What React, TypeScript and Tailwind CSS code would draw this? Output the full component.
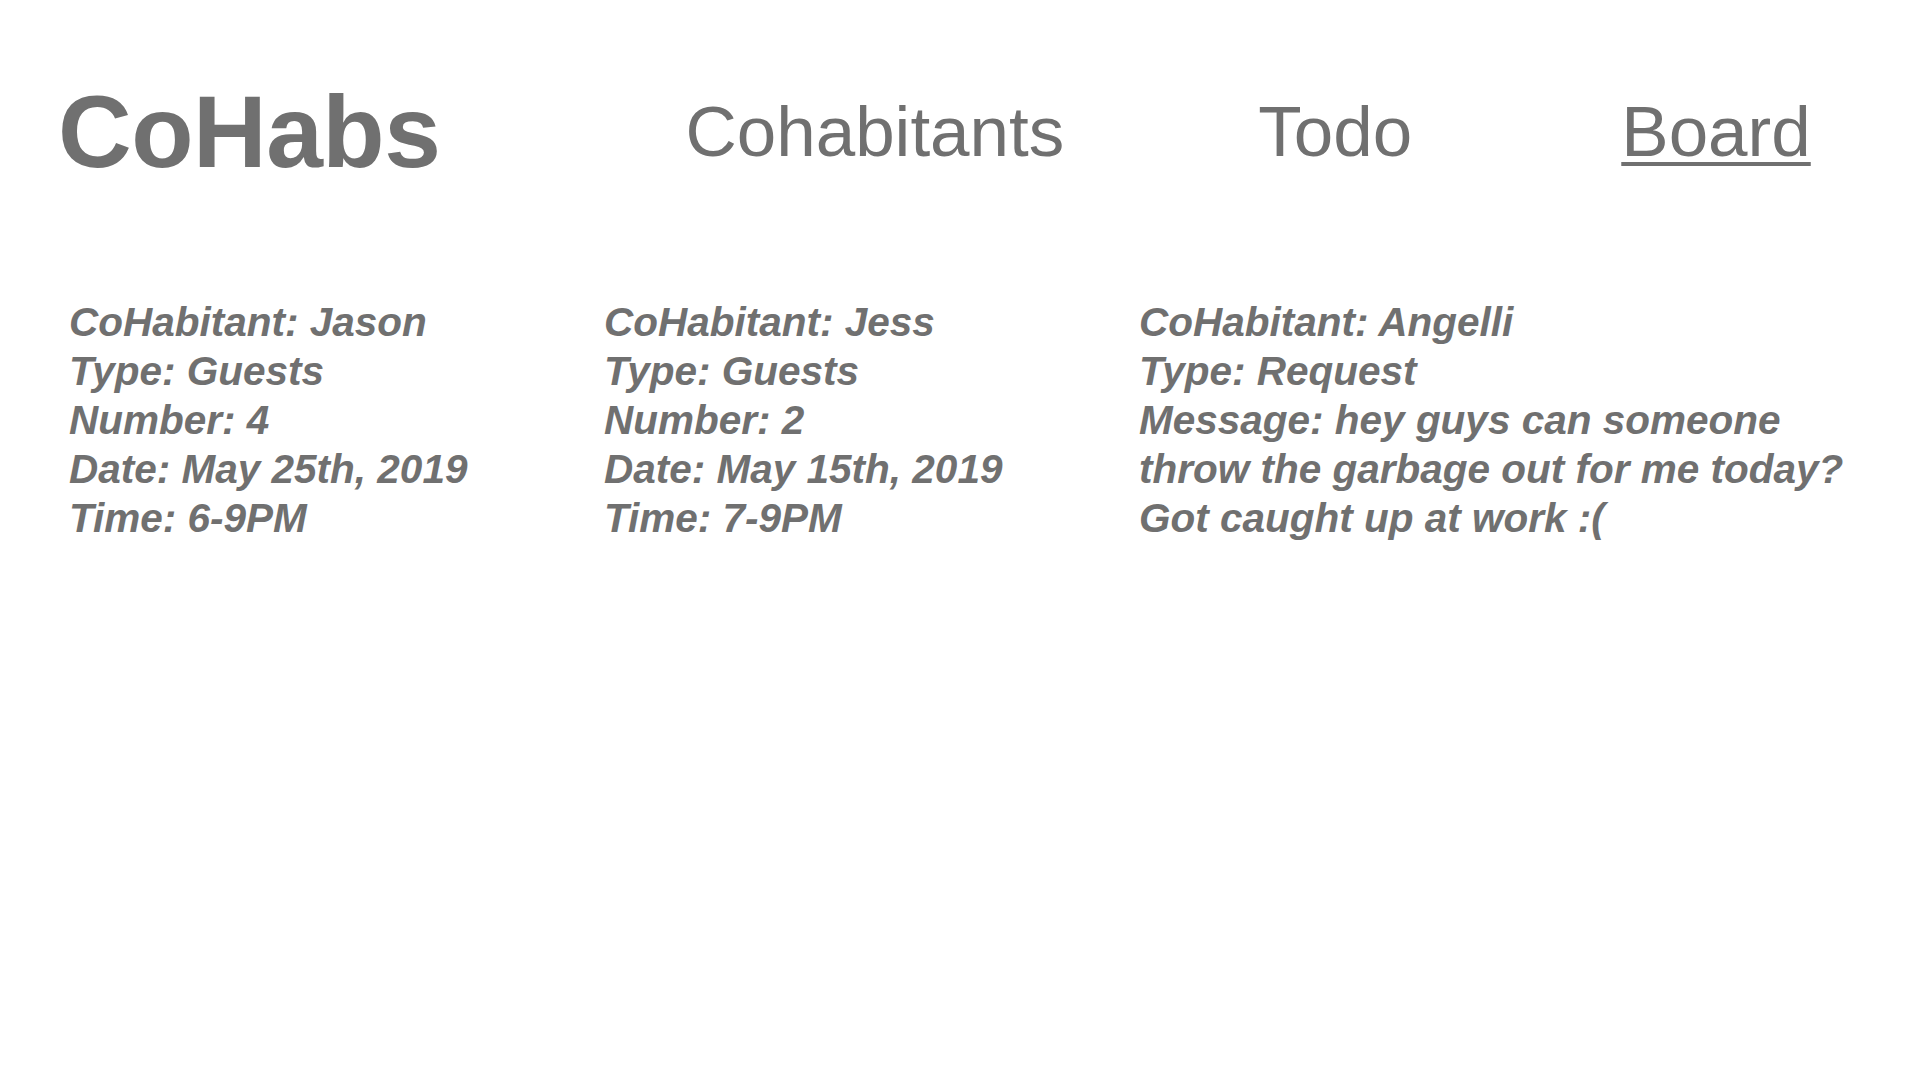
const posts = [
  {
    id: 1,
    lines: ["CoHabitant: Jason", "Type: Guests", "Number: 4", "Date: May 25th, 2019", "Time: 6-9PM"],
  },
  {
    id: 2,
    lines: ["CoHabitant: Jess", "Type: Guests", "Number: 2", "Date: May 15th, 2019", "Time: 7-9PM"],
  },
  {
    id: 3,
    lines: [
      "CoHabitant: Angelli",
      "Type: Request",
      "Message: hey guys can someone",
      "throw the garbage out for me today?",
      "Got caught up at work :(",
    ],
  },
];

const App = () => {
  return (
    <div className="w-[1920px] h-[1080px] bg-white text-[#707070] font-['Liberation_Sans',Arial,sans-serif] overflow-hidden">
      {/* header */}
      <header className="flex items-start pl-[58px] pt-[81px]">
        <h1 className="text-[102px] font-bold leading-none tracking-[-0.5px]">CoHabs</h1>
        <nav className="flex items-start mt-[15px] text-[71px] leading-none">
          <a className="ml-[245px]">Cohabitants</a>
          <a className="ml-[194px]">Todo</a>
          <a className="ml-[209px] underline decoration-[4px] underline-offset-[6px]">Board</a>
        </nav>
      </header>

      {/* board posts */}
      <main className="flex pl-[69px] mt-[115px]">
        {posts.map((post) => (
          <div key={post.id} className="w-[535px] shrink-0 text-[40.5px] leading-[49px] font-bold italic whitespace-nowrap">
            {post.lines.map((line) => (
              <div key={line}>{line}</div>
            ))}
          </div>
        ))}
      </main>
    </div>
  );
};

export default App;
